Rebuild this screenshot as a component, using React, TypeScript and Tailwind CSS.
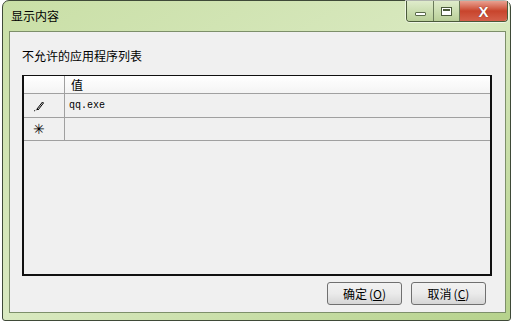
import React from "react";

const cjk = { fontFamily: '"Noto Sans CJK SC", "Liberation Sans", sans-serif' };

function Pencil() {
  return (
    <svg width="12" height="12" viewBox="0 0 12 12">
      <path d="M4 9 L9.5 2 L10.5 3 L5 10 Z" fill="none" stroke="#000" strokeWidth="1" />
      <path d="M1 11 L4 9.5" stroke="#000" strokeWidth="1" strokeDasharray="1 1" />
    </svg>
  );
}

function TitleButtons() {
  return (
    <div className="flex h-[21px] overflow-hidden rounded-b-[4px] border border-t-0 border-[#4a5a3a] shadow-[0_0_0_1px_rgba(255,255,255,0.6)]">
      <div className="flex w-[27px] items-center justify-center border-r border-[#6a7a5a] bg-gradient-to-b from-[#dfeccb] to-[#b9cf98]">
        <div className="mt-[5px] h-[4px] w-[11px] rounded-[1px] border border-[#5a6a4a] bg-white" />
      </div>
      <div className="flex w-[26px] items-center justify-center border-r border-[#6a7a5a] bg-gradient-to-b from-[#dfeccb] to-[#b9cf98]">
        <div className="h-[9px] w-[11px] border border-[#4a5a3a] bg-white p-[1px]">
          <div className="h-full w-full border-t-2 border-[#4a5a3a]" />
        </div>
      </div>
      <div className="flex w-[47px] items-center justify-center bg-gradient-to-b from-[#e8a090] via-[#c8442c] to-[#d4604a]">
        <span className="text-[15px] font-bold leading-none text-white [text-shadow:0_0_1px_#5a1a10]" style={{ fontFamily: '"Liberation Sans", sans-serif' }}>
          X
        </span>
      </div>
    </div>
  );
}

function Btn({ label, k }: { label: string; k: string }) {
  return (
    <div
      className="flex h-[23px] w-[75px] items-center justify-center rounded-[3px] border border-[#707070] bg-gradient-to-b from-[#f2f2f2] via-[#ebebeb] to-[#d6d6d6] text-[12px] text-black"
      style={cjk}
    >
      {label}
      <span className="ml-[2px]">(<span className="underline">{k}</span>)</span>
    </div>
  );
}

export default function App() {
  return (
    <div className="h-[323px] w-[514px] bg-white pl-[2px]">
      <div className="flex h-[321px] w-[509px] flex-col rounded-t-[7px] rounded-b-[3px] border border-[#3f4a38] bg-gradient-to-br from-[#c9dfa6] via-[#d9e9c0] to-[#b6d28c] pl-[6px] pr-[4px] pb-[7px]">
        <div className="flex h-[30px] items-start justify-between">
          <span className="mt-[6px] pl-[2px] text-[12px] text-black" style={cjk}>
            显示内容
          </span>
          <div className="mr-[-2px]">
            <TitleButtons />
          </div>
        </div>
        <div className="flex flex-1 flex-col border border-[#7d8f6a] bg-[#f0f0f0] pl-[12px] pr-[13px] pt-[15px]">
          <div className="h-[28px] text-[12px] leading-[18px] text-black" style={cjk}>
            不允许的应用程序列表
          </div>
          <div className="flex h-[201px] flex-col border-2 border-[#101010] border-t-[1.5px] bg-[#f0f0f0]">
            <div className="flex h-[18px] border-b border-[#a0a0a0] bg-gradient-to-b from-white to-[#f4f4f4]">
              <div className="w-[41px] border-r border-[#a0a0a0]" />
              <div className="pl-[6px] text-[12px] leading-[18px]" style={cjk}>
                值
              </div>
            </div>
            <div className="flex h-[24px] border-b border-[#a0a0a0]">
              <div className="flex w-[41px] items-center border-r border-[#a0a0a0] pl-[9px]">
                <Pencil />
              </div>
              <div className="flex items-center pl-[4px] text-[10px]" style={{ fontFamily: '"Liberation Mono", monospace' }}>
                qq.exe
              </div>
            </div>
            <div className="flex h-[23px] border-b border-[#a0a0a0]">
              <div className="flex w-[41px] items-center border-r border-[#a0a0a0] pl-[9px] text-[14px] leading-none" style={{ fontFamily: '"DejaVu Sans", sans-serif' }}>
                ✳
              </div>
              <div />
            </div>
          </div>
          <div className="mt-[6px] flex justify-end gap-[9px] pr-[6px]">
            <Btn label="确定" k="O" />
            <Btn label="取消" k="C" />
          </div>
        </div>
      </div>
    </div>
  );
}
